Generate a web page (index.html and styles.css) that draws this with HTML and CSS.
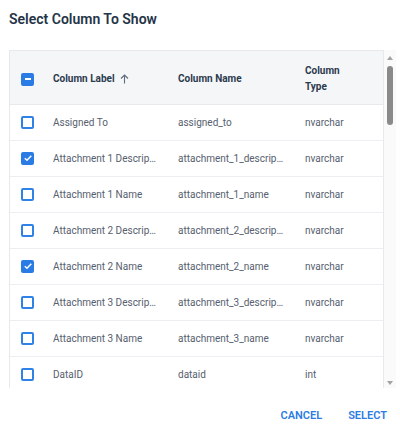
FILE: index.html
```html
<!DOCTYPE html>
<html lang="en">
<head>
<meta charset="utf-8">
<title>Select Column To Show</title>
<link rel="stylesheet" href="styles.css">
</head>
<body>
<div class="dialog">
  <h2 class="title">Select Column To Show</h2>
  <div class="grid-wrap">
    <div class="viewport">
      <table class="grid">
        <colgroup>
          <col class="c0"><col class="c1"><col class="c2"><col class="c3">
        </colgroup>
        <thead>
          <tr>
            <th class="chk-cell"><span class="cb cb-ind"><span class="minus"></span></span></th>
            <th><span class="hlabel">Column Label
              <svg class="sort" width="9" height="10" viewBox="0 0 9 10"><path d="M4.5 9.5V1M1 4.5L4.5 1L8 4.5" fill="none" stroke="#5f6b7a" stroke-width="1.1"/></svg></span></th>
            <th>Column Name</th>
            <th><span class="wrap2">Column Type</span></th>
          </tr>
        </thead>
        <tbody>
          <tr><td class="chk-cell"><span class="cb"></span></td><td>Assigned To</td><td>assigned_to</td><td>nvarchar</td></tr>
          <tr><td class="chk-cell"><span class="cb cb-on"><svg width="10" height="10" viewBox="0 0 10 10"><path d="M1.8 5.2L4 7.3L8.3 2.8" fill="none" stroke="#fff" stroke-width="1.5"/></svg></span></td><td>Attachment 1 Description</td><td>attachment_1_description</td><td>nvarchar</td></tr>
          <tr><td class="chk-cell"><span class="cb"></span></td><td>Attachment 1 Name</td><td>attachment_1_name</td><td>nvarchar</td></tr>
          <tr><td class="chk-cell"><span class="cb"></span></td><td>Attachment 2 Description</td><td>attachment_2_description</td><td>nvarchar</td></tr>
          <tr><td class="chk-cell"><span class="cb cb-on"><svg width="10" height="10" viewBox="0 0 10 10"><path d="M1.8 5.2L4 7.3L8.3 2.8" fill="none" stroke="#fff" stroke-width="1.5"/></svg></span></td><td>Attachment 2 Name</td><td>attachment_2_name</td><td>nvarchar</td></tr>
          <tr><td class="chk-cell"><span class="cb"></span></td><td>Attachment 3 Description</td><td>attachment_3_description</td><td>nvarchar</td></tr>
          <tr><td class="chk-cell"><span class="cb"></span></td><td>Attachment 3 Name</td><td>attachment_3_name</td><td>nvarchar</td></tr>
          <tr><td class="chk-cell"><span class="cb"></span></td><td>DataID</td><td>dataid</td><td>int</td></tr>
        </tbody>
      </table>
    </div>
    <div class="scrollbar">
      <div class="sb-btn"><span class="arrow-up"></span></div>
      <div class="thumb"></div>
      <div class="sb-fill"></div>
      <div class="sb-btn"><span class="arrow-down"></span></div>
    </div>
  </div>
  <div class="actions">
    <button class="btn">CANCEL</button>
    <button class="btn">SELECT</button>
  </div>
</div>
</body>
</html>
```

FILE: styles.css
```css
* { box-sizing: border-box; }
html, body { margin: 0; padding: 0; background: #fff; }
body {
  font-family: "Roboto", "Liberation Sans", sans-serif;
  width: 400px;
  height: 433px;
  overflow: hidden;
}
.dialog { padding-top: 9px; }
.title {
  margin: 0 0 21px 9px;
  font-size: 14px;
  line-height: 20px;
  font-weight: 600;
  color: #243447;
}
.grid-wrap {
  display: flex;
  margin-left: 9px;
  height: 338px;
}
.viewport {
  width: 375px;
  height: 338px;
  overflow: hidden;
  border: 1px solid #e7e9ec;
  border-bottom: none;
}
.grid {
  border-collapse: collapse;
  table-layout: fixed;
  width: 373px;
}
.c0 { width: 35px; }
.c1 { width: 125px; }
.c2 { width: 127px; }
.c3 { width: 86px; }
.grid th {
  height: 53px;
  background: #f5f6f8;
  border-bottom: 1px solid #e7e9ec;
  text-align: left;
  font-size: 10px;
  font-weight: 700;
  color: #2c3a4e;
  line-height: 16px;
  padding: 3px 12px 0 8px;
  white-space: nowrap;
}
.grid td {
  height: 36px;
  border-bottom: 1px solid #eceef1;
  font-size: 10px;
  color: #56606e;
  padding: 0 12px 0 8px;
  white-space: nowrap;
  overflow: hidden;
  text-overflow: ellipsis;
}
.grid .chk-cell { padding: 0; text-align: center; }
.grid th.chk-cell { padding-top: 3px; }
.hlabel { display: inline-flex; align-items: center; gap: 5px; }
.sort { display: block; }
.wrap2 { display: block; white-space: normal; width: 40px; }
.cb {
  display: inline-flex;
  align-items: center;
  justify-content: center;
  width: 13px;
  height: 13px;
  border: 2px solid #3182e6;
  border-radius: 2px;
  vertical-align: middle;
  background: #fff;
}
.cb-on, .cb-ind { background: #2a7be4; border-color: #2a7be4; }
.cb svg { display: block; flex: none; }
.minus { display: block; width: 6px; height: 2px; background: #fff; }
.scrollbar {
  width: 12px;
  display: flex;
  flex-direction: column;
  align-items: center;
  background: #fafafa;
}
.sb-btn {
  height: 16px;
  width: 12px;
  display: flex;
  align-items: center;
  justify-content: center;
}
.arrow-up {
  width: 0; height: 0;
  border-left: 3.5px solid transparent;
  border-right: 3.5px solid transparent;
  border-bottom: 4px solid #a3a3a3;
}
.arrow-down {
  width: 0; height: 0;
  border-left: 3.5px solid transparent;
  border-right: 3.5px solid transparent;
  border-top: 4px solid #a3a3a3;
  margin-top: 6px;
}
.thumb {
  width: 6px;
  height: 59px;
  background: #8a8a8a;
  border-radius: 3px;
}
.sb-fill { flex: 1; }
.actions {
  display: flex;
  justify-content: flex-end;
  gap: 10px;
  padding: 12px 5px 0 0;
}
.btn {
  font-family: "Roboto", "Liberation Sans", sans-serif;
  font-size: 11px;
  font-weight: 600;
  color: #2b7de3;
  background: none;
  border: none;
  height: 30px;
  padding: 0 8px;
  cursor: pointer;
}
```
